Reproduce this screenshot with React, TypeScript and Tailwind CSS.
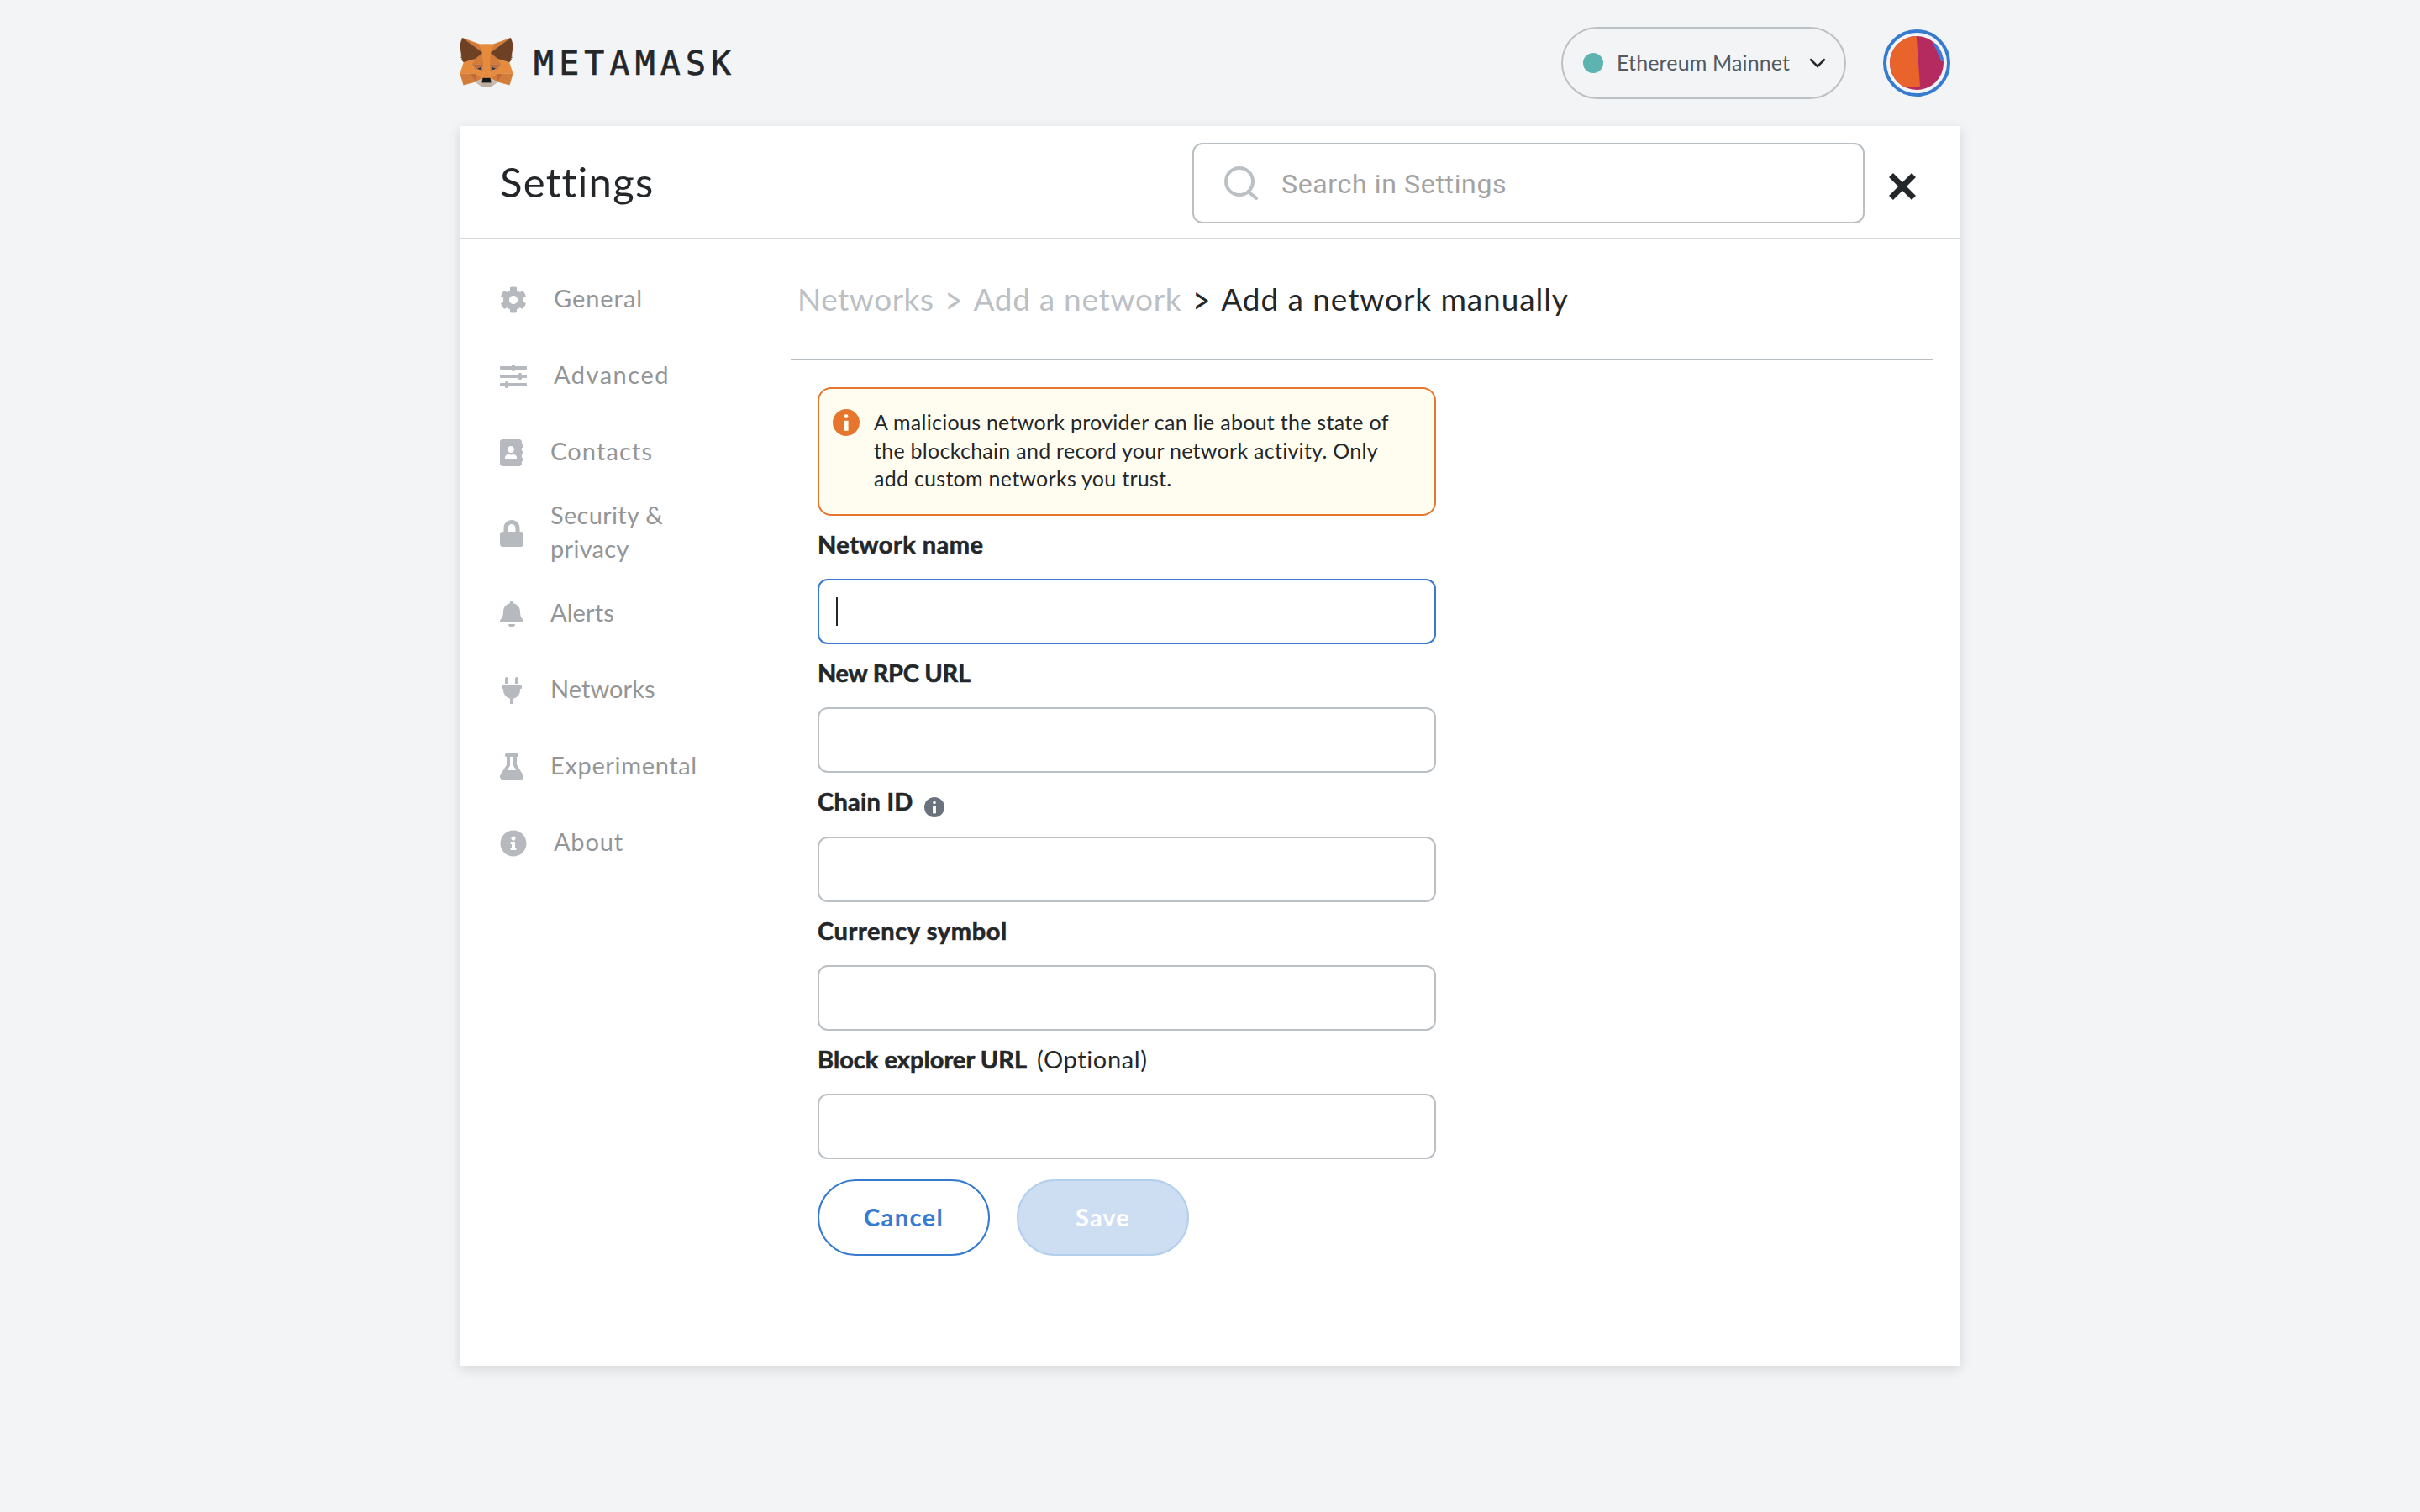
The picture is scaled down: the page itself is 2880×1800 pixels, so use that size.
import React from "react";
import { FaAddressBook, FaBell, FaCog, FaFlask, FaInfoCircle, FaLock, FaPlug } from "react-icons/fa";

function FoxLogo() {
  return (
    <svg viewBox="1 1 33.62 31.9" preserveAspectRatio="none" className="h-[60px] w-[64px] shrink-0" strokeLinejoin="round" strokeWidth="0.15">
      <path d="m32.9582 1-13.1341 9.7183 2.4424-5.72731z" fill="#d57d38" stroke="#d57d38" />
      <g fill="#d37c39" stroke="#d37c39">
        <path d="m2.66296 1 13.01714 9.809-2.3254-5.81802z" />
        <path d="m28.2295 23.5335-3.4947 5.3386 7.4829 2.0603 2.1436-7.2823z" />
        <path d="m1.27281 23.6501 2.13055 7.2823 7.46994-2.0603-3.48166-5.3386z" />
        <path d="m10.4706 14.5149-2.0786 3.1358 7.405.3369-.2469-7.969z" />
        <path d="m25.1505 14.5149-5.1575-4.58704-.1688 8.05974 7.4049-.3369z" />
        <path d="m10.8733 28.8721 4.4819-2.1639-3.8583-3.0062z" />
        <path d="m20.2659 26.7082 4.4689 2.1639-.6105-5.1701z" />
      </g>
      <g fill="#cfbdb1" stroke="#cfbdb1">
        <path d="m24.7348 28.8721-4.469-2.1639.3638 2.9025-.039 1.231z" />
        <path d="m10.8732 28.8721 4.1572 1.9696-.026-1.231.3508-2.9025z" />
      </g>
      <g fill="#2d3446" stroke="#2d3446">
        <path d="m15.1084 21.7842-3.7155-1.0884 2.6243-1.2051z" />
        <path d="m20.5126 21.7842 1.0913-2.2935 2.6372 1.2051z" />
      </g>
      <g fill="#bf6a38" stroke="#bf6a38">
        <path d="m10.8733 28.8721.6495-5.3386-4.1312.1167z" />
        <path d="m24.0982 23.5335.6366 5.3386 3.4946-5.2219z" />
        <path d="m27.2291 17.6507-7.405.3369.6885 3.7966 1.0913-2.2935 2.6372 1.2051z" />
        <path d="m11.3929 20.6958 2.6242-1.2051 1.0913 2.2935.6885-3.7966-7.40495-.3369z" />
      </g>
      <g fill="#d37c39" stroke="#d37c39">
        <path d="m8.392 17.6507 3.1049 6.0513-.1039-3.0062z" />
        <path d="m24.2412 20.6958-.1169 3.0062 3.1049-6.0513z" />
        <path d="m15.797 17.9876-.6886 3.7967.8704 4.4833.1949-5.9087z" />
        <path d="m19.8242 17.9876-.3638 2.3584.1819 5.9216.8704-4.4833z" />
      </g>
      <g fill="#e68b3c" stroke="#e68b3c">
        <path d="m20.5127 21.7842-.8704 4.4834.6236.4406 3.8584-3.0062.1169-3.0062z" />
        <path d="m11.3929 20.6958.104 3.0062 3.8583 3.0062.6236-.4406-.8704-4.4834z" />
      </g>
      <path d="m20.5906 30.8417.039-1.231-.3378-.2851h-4.9626l-.3248.2851.026 1.231-4.1572-1.9696 1.4551 1.1921 2.9489 2.0344h5.0536l2.962-2.0344 1.442-1.1921z" fill="#bbada0" stroke="#bbada0" />
      <path d="m20.2659 26.7082-.6236-.4406h-3.6635l-.6236.4406-.3508 2.9025.3248-.2851h4.9626l.3378.2851z" fill="#161616" stroke="#161616" />
      <g fill="#6f4124" stroke="#6f4124">
        <path d="m33.5168 11.3532 1.1043-5.36447-1.6629-4.98873-12.6923 9.3944 4.8846 4.1205 6.8983 2.0085 1.52-1.7752-.6626-.4795 1.0523-.9588-.8054-.622 1.0523-.8034z" />
        <path d="m1 5.98873 1.11724 5.36447-.71451.5313 1.06527.8034-.80545.622 1.05228.9588-.66255.4795 1.51997 1.7752 6.89835-2.0085 4.8846-4.1205-12.69233-9.3944z" />
      </g>
      <g fill="#e68b3c" stroke="#e68b3c">
        <path d="m32.0489 16.5234-6.8983-2.0085 2.0786 3.1358-3.1049 6.0513 4.1052-.0519h6.1318z" />
        <path d="m10.4705 14.5149-6.89828 2.0085-2.29944 7.1267h6.11883l4.10519.0519-3.10487-6.0513z" />
        <path d="m19.8241 17.9876.4417-7.5932 2.0007-5.4034h-8.9119l2.0006 5.4034.4417 7.5932.1689 2.3842.013 5.8958h3.6635l.013-5.8958z" />
      </g>
    </svg>
  );
}

function SlidersIcon({ className }: { className?: string }) {
  return (
    <svg viewBox="0 0 32 28" className={className} fill="currentColor">
      <rect x="0" y="2" width="32" height="4" rx="1" />
      <rect x="14" y="0" width="4" height="8" rx="1.6" />
      <rect x="0" y="12" width="32" height="4" rx="1" />
      <rect x="22" y="10" width="4" height="8" rx="1.6" />
      <rect x="0" y="22" width="32" height="4" rx="1" />
      <rect x="6" y="20" width="4" height="8" rx="1.6" />
    </svg>
  );
}

function InfoDot({ className }: { className: string }) {
  return (
    <svg viewBox="0 0 32 32" className={className}>
      <circle cx="16" cy="16" r="16" fill="currentColor" />
      <circle cx="16" cy="8.6" r="2.4" fill="#fffdf0" />
      <rect x="13.4" y="13.8" width="5.2" height="12" fill="#fffdf0" />
    </svg>
  );
}

const NAV = [
  { label: "General", Icon: FaCog, icon: "h-8 w-8", text: "tracking-[0.95px]", row: "h-[91px]" },
  { label: "Advanced", Icon: SlidersIcon, icon: "h-7 w-8", text: "tracking-[1.5px]", row: "h-[91px]" },
  { label: "Contacts", Icon: FaAddressBook, icon: "h-8 w-7", text: "tracking-[1.15px]", row: "h-[91px]" },
  { label: "Security & privacy", Icon: FaLock, icon: "h-8 w-7", text: "w-[150px] tracking-[0.3px]", row: "h-[101px]" },
  { label: "Alerts", Icon: FaBell, icon: "h-8 w-7", text: "tracking-[0.1px]", row: "h-[91px]" },
  { label: "Networks", Icon: FaPlug, icon: "h-8 w-7", text: "tracking-[0.05px]", row: "h-[91px]" },
  { label: "Experimental", Icon: FaFlask, icon: "h-8 w-7", text: "tracking-[0.65px]", row: "h-[91px]" },
  { label: "About", Icon: FaInfoCircle, icon: "h-8 w-8", text: "tracking-[0.8px]", row: "h-[91px]" },
];

const FIELDS = [
  { label: "Network name", text: "tracking-[0.45px]", focused: true },
  { label: "New RPC URL", text: "tracking-[-0.3px]" },
  { label: "Chain ID", text: "tracking-[0.25px]", info: true },
  { label: "Currency symbol", text: "tracking-[0.64px]" },
  { label: "Block explorer URL", text: "tracking-[0.04px]", optional: true },
];

function TopBar() {
  return (
    <header className="flex h-[150px] items-center justify-between pr-3">
      <div className="flex items-center gap-6">
        <FoxLogo />
        <span className="pt-[2px] font-['DejaVu_Sans_Mono',monospace] text-[39.8px] leading-none tracking-[6.2px] [-webkit-text-stroke:0.7px_#24272a]">METAMASK</span>
      </div>
      <div className="flex items-center gap-11">
        <button className="flex h-[86px] w-[339px] items-center rounded-full border-2 border-[#bbc0c5] pr-[22px] pl-6">
          <span className="h-6 w-6 rounded-full bg-[#5cb3b0]" />
          <span className="ml-4 pb-[2px] text-[25px] leading-none tracking-[0.14px] whitespace-nowrap text-[#535a61]">Ethereum Mainnet</span>
          <svg viewBox="0 0 20 12" className="ml-auto h-3 w-5" fill="none" stroke="#24272a" strokeWidth="2.6">
            <path d="M1.2 1.4 L10 10 L18.8 1.4" />
          </svg>
        </button>
        <div className="flex h-20 w-20 items-center justify-center rounded-full border-4 border-[#377bd1]">
          <svg viewBox="0 0 64 64" className="h-16 w-16 rounded-full">
            <rect width="64" height="64" fill="#b62b5f" />
            <path d="M0 0 H31.7 L36 59.7 L0 62.4 Z" fill="#e8642b" />
            <path d="M48 0 L61.3 30.3 L70 27 V0 Z" fill="#3f7bdc" />
          </svg>
        </div>
      </div>
    </header>
  );
}

function PanelHeader() {
  return (
    <div className="flex h-[135px] items-center border-b-2 border-[#d6d9dc] pl-12">
      <h1 className="text-[49px] leading-none tracking-[1.3px]">Settings</h1>
      <div className="mt-[3px] ml-auto flex h-24 w-[800px] items-center rounded-xl border-2 border-[#bbc0c5] pl-9">
        <svg viewBox="0 0 40 40" className="h-10 w-10" fill="none" stroke="#bbc0c5" strokeWidth="4">
          <circle cx="18" cy="18" r="16" />
          <path d="M29 30.5 L38 38" strokeLinecap="round" />
        </svg>
        <span className="ml-7 pt-[1px] font-['Roboto',sans-serif] text-[32px] leading-none tracking-[0.65px] text-[#a3a3a3]">Search in Settings</span>
      </div>
      <svg viewBox="0 0 34 34" className="mt-[11px] mr-[52px] ml-[28px] h-[34px] w-[34px]" fill="none" stroke="#24272a" strokeWidth="7">
        <path d="M3.5 3.5 L30.5 30.5 M30.5 3.5 L3.5 30.5" />
      </svg>
    </div>
  );
}

function Sidebar() {
  return (
    <nav className="w-[394px] shrink-0 pt-[25px] pl-12">
      {NAV.map(({ label, Icon, icon, text, row }) => (
        <div key={label} className={`flex items-center gap-8 ${row}`}>
          <Icon className={`mt-[2px] shrink-0 text-[#b6babf] ${icon}`} />
          <span className={`pb-[2px] text-[29px] leading-10 text-[#949596] ${text}`}>{label}</span>
        </div>
      ))}
    </nav>
  );
}

function Breadcrumb() {
  return (
    <div className="flex h-36 items-center border-b-2 border-[#bbc0c5] pb-[2px] pl-2 text-[37px] leading-none whitespace-nowrap text-[#bbc0c5]">
      <span className="tracking-[0.5px]">Networks</span>
      <span className="w-[47px] scale-y-125 text-center">&gt;</span>
      <span className="tracking-[0.7px]">Add a network</span>
      <span className="w-[47px] scale-y-125 text-center text-[#24272a]">&gt;</span>
      <span className="tracking-[0.92px] text-[#24272a]">Add a network manually</span>
    </div>
  );
}

function NetworkForm() {
  return (
    <div className="ml-8 w-[736px] pt-8">
      <div className="flex h-[153px] gap-[17px] rounded-2xl border-2 border-[#e6752e] bg-[#fffdf0] pt-[23px] pl-4">
        <InfoDot className="mt-[1px] h-8 w-8 shrink-0 text-[#e6752e]" />
        <p className="text-[25px] leading-[33.5px] tracking-[0.27px] whitespace-nowrap">
          A malicious network provider can lie about the state of
          <br />
          the blockchain and record your network activity. Only
          <br />
          add custom networks you trust.
        </p>
      </div>
      {FIELDS.map((f) => (
        <div key={f.label}>
          <div className="flex h-[75.2px] items-center pb-[7px] text-[29px] leading-10">
            <span className={`font-bold [-webkit-text-stroke:0.6px_#24272a] ${f.text}`}>{f.label}</span>
            {f.info && <InfoDot className="mt-[13px] ml-[13px] h-6 w-6 text-[#6a737d]" />}
            {f.optional && <span className="ml-3 tracking-[0.65px]">(Optional)</span>}
          </div>
          <div className={`flex h-[78px] items-center rounded-xl border-2 pl-5 ${f.focused ? "border-[#377bd1]" : "border-[#bbc0c5]"}`}>
            {f.focused && <span className="h-[34px] w-[2px] bg-[#24272a]" />}
          </div>
        </div>
      ))}
      <div className="mt-6 flex gap-8 text-[29px] font-bold">
        <button className="h-[91px] w-[205px] rounded-full border-2 border-[#377bd1] pb-[2px] tracking-[1.4px] text-[#377bd1]">Cancel</button>
        <button className="h-[91px] w-[205px] rounded-full border-2 border-[#b3cfee] bg-[#cdddf2] pb-[2px] tracking-[1.1px] text-white">Save</button>
      </div>
    </div>
  );
}

export default function App() {
  return (
    <div className="h-[1800px] w-[2880px] bg-[#f2f4f6] font-['Lato',sans-serif] text-[#24272a]">
      <div className="ml-[547px] w-[1786px]">
        <TopBar />
        <main className="h-[1476px] bg-white shadow-[0_4px_14px_rgba(0,0,0,0.12)]">
          <PanelHeader />
          <div className="flex">
            <Sidebar />
            <section className="w-[1360px]">
              <Breadcrumb />
              <NetworkForm />
            </section>
          </div>
        </main>
      </div>
    </div>
  );
}
